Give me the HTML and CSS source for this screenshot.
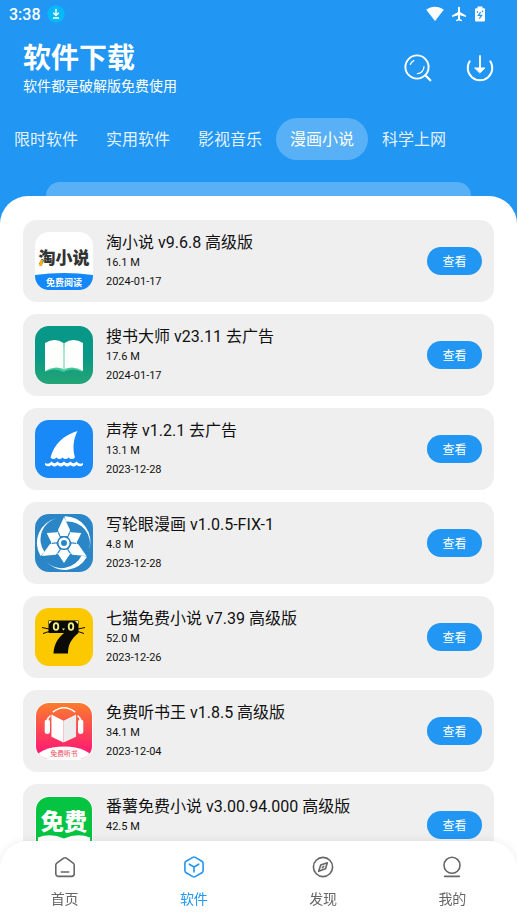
FILE: index.html
```
<!DOCTYPE html>
<html lang="zh-CN">
<head>
    <meta charset="UTF-8">
    <meta name="viewport" content="width=device-width, initial-scale=1.0">
    <title>软件下载</title>
    <link rel="stylesheet" href="styles.css">
</head>
<body>
    <header class="header">
        <div class="status-bar">
            <span class="time">3:38</span>
            <svg class="status-dl" width="18" height="18" viewBox="0 0 18 18">
                <circle cx="9" cy="9" r="8.7" fill="#03b9fb"/>
                <path d="M9 3.8v6.4M6.2 7.8L9 10.6l2.8-2.8M6 13h6" fill="none" stroke="#fff" stroke-width="1.4"/>
            </svg>
            <div class="status-icons">
                <svg width="18" height="16" viewBox="0 0 18 16"><path d="M.2 3.8C5.4-.2 12.600-.2 17.800 3.800L9 15z" fill="#fff"/></svg>
                <svg width="16" height="16" viewBox="0 0 16 16"><path d="M7 1.800a1 1 0 0 1 2 0V6l6 3.400v1.500L9 9.300v3.600l1.800 1.200v1.200L8 14.500l-2.800.8v-1.200L7 12.900V9.300l-6 1.600V9.400L7 6z" fill="#fff"/></svg>
                <svg width="12" height="16" viewBox="0 0 12 16">
                    <path d="M3.500.5h5v1.700H10a1 1 0 0 1 1 1V14.500a1 1 0 0 1-1 1H2a1 1 0 0 1-1-1V3.200a1 1 0 0 1 1-1h1.500z" fill="#fff"/>
                    <path d="M6.700 6L4.300 9.300h3.400L5.300 12.600M3.500 5.300v1.700M8.500 4.500v1.700" fill="none" stroke="#2196f3" stroke-width="1.200"/>
                </svg>
            </div>
        </div>

        <div class="title-row">
            <div>
                <h1>软件下载</h1>
                <p>软件都是破解版免费使用</p>
            </div>
            <div class="actions">
                <button class="icon-btn" aria-label="搜索">
                    <svg width="30" height="30" viewBox="0 0 30 30" fill="none" stroke="#fff" stroke-linecap="round">
                        <circle cx="14" cy="14" r="11.600" stroke-width="1.900"/>
                        <path d="M22.500 22.500l4.800 4.800" stroke-width="2.200"/>
                        <path d="M7.300 11.500c.6-1.800 1.900-3.100 3.500-3.900M21 13.500c0 4-2.800 7-6.600 7.200" stroke-width="1.200"/>
                    </svg>
                </button>
                <button class="icon-btn" aria-label="下载">
                    <svg width="30" height="30" viewBox="0 0 30 30" fill="none" stroke="#fff" stroke-linecap="round">
                        <path d="M4.700 8.200A12.300 12.300 0 1 0 25.300 8.200" stroke-width="1.900"/>
                        <path d="M15 3v14" stroke-width="1.900"/>
                        <path d="M10 15h10l-5 4.700z" fill="#fff" stroke-width="1"/>
                    </svg>
                </button>
            </div>
        </div>

        <nav class="tabs">
            <button class="tab">限时软件</button>
            <button class="tab">实用软件</button>
            <button class="tab">影视音乐</button>
            <button class="tab active">漫画小说</button>
            <button class="tab">科学上网</button>
        </nav>
        <div class="back-panel"></div>
    </header>

    <main class="sheet">
        <ul class="app-list">
            <li class="card">
                <svg class="app-icon" viewBox="0 0 58 58">
                    <rect width="58" height="58" fill="#fff"/>
                    <text x="29" y="32" font-size="17" font-weight="900" text-anchor="middle" fill="#333">淘小说</text>
                    <path d="M4 34l1.500-6h2.500l-1 6z" fill="#ffb020"/>
                    <path d="M0 43Q29 39 58 43V58H0z" fill="#1488fa"/>
                    <text x="29" y="54" font-size="9" font-weight="700" text-anchor="middle" fill="#fff">免费阅读</text>
                </svg>
                <div class="info">
                    <h2>淘小说 v9.6.8 高级版</h2>
                    <p>16.1 M</p>
                    <p>2024-01-17</p>
                </div>
                <button class="view-btn">查看</button>
            </li>
            <li class="card">
                <svg class="app-icon" viewBox="0 0 58 58">
                    <defs>
                        <linearGradient id="teal" x1="0" y1="0" x2="0" y2="1">
                            <stop offset=".5" stop-color="#079887"/>
                            <stop offset="1" stop-color="#24a575"/>
                        </linearGradient>
                    </defs>
                    <rect width="58" height="58" fill="url(#teal)"/>
                    <path d="M10 21q9-5 18.500 0 9.500-5 19 0v25q-10-5-19 0-9-5-18.500 0z" fill="#46c79a"/>
                    <path d="M10 17q10-6 18.500 0v26q-9-4-18.500 2zM29.500 17q9-6 18.500 0v28q-9-6-18.500-2z" fill="#fdfffc"/>
                    <path d="M29 17v27" stroke="#b5e9d2" stroke-width="1"/>
                </svg>
                <div class="info">
                    <h2>搜书大师 v23.11 去广告</h2>
                    <p>17.6 M</p>
                    <p>2024-01-17</p>
                </div>
                <button class="view-btn">查看</button>
            </li>
            <li class="card">
                <svg class="app-icon" viewBox="0 0 58 58">
                    <rect width="58" height="58" fill="#1989f8"/>
                    <path d="M42.500 11C29 15 19 24 15.500 37.500q3 3 6 0 3 3 6 0 3 3 6 0 3 3 6.500 0C37.500 29 38 20 42.500 11z" fill="#fff"/>
                    <path d="M10 43q3.500 2 6.500-1.500 3 3.500 6 0 3 3.500 6.500 0 3 3.500 6.500 0 3 3.500 6 0 3 3.500 6.500 1.500v2q-3 2.500-6.500 0-3 3-6 0-3 3-6.500 0-3 3-6.500 0-3 3-6 0-3 2.500-6.500 0z" fill="#fff"/>
                </svg>
                <div class="info">
                    <h2>声荐 v1.2.1 去广告</h2>
                    <p>13.1 M</p>
                    <p>2023-12-28</p>
                </div>
                <button class="view-btn">查看</button>
            </li>
            <li class="card">
                <svg class="app-icon" viewBox="-29 -29 58 58">
                    <defs>
                        <g id="blade">
                            <path d="M0-26L6-13 3.500-7h-7L-6-13z"/>
                            <path d="M-7-25A25.500 25.500 0 0 0-23.500 13L-19.500 9A22 22 0 0 1-7-25z"/>
                            <path d="M0 20L6 11 3 6.500h-6L-6 11z"/>
                        </g>
                    </defs>
                    <rect x="-29" y="-29" width="58" height="58" fill="#2b86c8"/>
                    <g fill="#fff">
                        <use href="#blade"/>
                        <use href="#blade" transform="rotate(120)"/>
                        <use href="#blade" transform="rotate(240)"/>
                    </g>
                    <circle r="12.500" fill="none" stroke="#fff" stroke-width=".7"/>
                    <circle r="7" fill="#2b86c8"/>
                    <circle r="5.500" fill="#fff"/>
                    <circle r="3" fill="#2b86c8"/>
                </svg>
                <div class="info">
                    <h2>写轮眼漫画 v1.0.5-FIX-1</h2>
                    <p>4.8 M</p>
                    <p>2023-12-28</p>
                </div>
                <button class="view-btn">查看</button>
            </li>
            <li class="card">
                <svg class="app-icon" viewBox="0 0 58 58">
                    <rect width="58" height="58" fill="#fcc800"/>
                    <path d="M13.500 12.500h30V25C36 31 33 37 33 45.500H18.500C19 36 23 30 29 25H13.500z" fill="#0a0a06"/>
                    <g fill="none" stroke="#f2ee86" stroke-width="1.800">
                        <ellipse cx="21" cy="18.500" rx="2.300" ry="3.400"/>
                        <ellipse cx="36" cy="18.500" rx="2.300" ry="3.400"/>
                    </g>
                    <path d="M27 20.500h3l-1.500 2zM14 13h3l-3 3zM43 13h-3l3 3z" fill="#f2ee86"/>
                    <path d="M7 19.500l7 1.500M8 25.500l6-2M43 21l7-1.500M43 23.500l6 2" stroke="#0a0a06" stroke-width="1"/>
                </svg>
                <div class="info">
                    <h2>七猫免费小说 v7.39 高级版</h2>
                    <p>52.0 M</p>
                    <p>2023-12-26</p>
                </div>
                <button class="view-btn">查看</button>
            </li>
            <li class="card">
                <svg class="app-icon edged" viewBox="0 0 58 58">
                    <defs>
                        <linearGradient id="sunset" x1="0" y1="0" x2="0" y2="1">
                            <stop offset="0" stop-color="#fc7c2c"/>
                            <stop offset=".85" stop-color="#fe1e70"/>
                        </linearGradient>
                    </defs>
                    <rect width="58" height="58" fill="url(#sunset)"/>
                    <ellipse cx="29" cy="60" rx="31" ry="15" fill="#fff"/>
                    <path d="M16 12l12.500 6.500V41L16 35z" fill="#fff"/>
                    <path d="M41.500 12L28.500 18.500V41l13-6z" fill="#ececec"/>
                    <path d="M17.500 9.500q11.500-9 23 0M15 13q-3 2-3.500 6M43 13q3 2 3.500 6" fill="none" stroke="#fff" stroke-width="1.500"/>
                    <rect x="9" y="17" width="5.500" height="15" rx="2.700" fill="#fff"/>
                    <rect x="43.500" y="17" width="5.500" height="15" rx="2.700" fill="#fff"/>
                    <text x="29" y="54.500" font-size="7" font-weight="500" text-anchor="middle" fill="#f5596b">免费听书</text>
                </svg>
                <div class="info">
                    <h2>免费听书王 v1.8.5 高级版</h2>
                    <p>34.1 M</p>
                    <p>2023-12-04</p>
                </div>
                <button class="view-btn">查看</button>
            </li>
            <li class="card">
                <svg class="app-icon edged" viewBox="0 0 58 58">
                    <rect width="58" height="58" fill="#05c441"/>
                    <text x="29" y="34" font-size="24" font-weight="900" text-anchor="middle" fill="#fff">免费</text>
                    <path d="M2 42q13-5 27 1 14-6 27-1v16H2z" fill="#fff"/>
                </svg>
                <div class="info">
                    <h2>番薯免费小说 v3.00.94.000 高级版</h2>
                    <p>42.5 M</p>
                    <p>2023-12-04</p>
                </div>
                <button class="view-btn">查看</button>
            </li>
        </ul>
    </main>

    <nav class="bottom-nav">
        <a href="#home">
            <svg viewBox="0 0 24 24"><path d="M3.800 8.200L10.600 3.200a2.400 2.400 0 0 1 2.800 0L20.200 8.200a2.400 2.400 0 0 1 1 2V18.800a2.600 2.600 0 0 1-2.600 2.600H5.400a2.600 2.600 0 0 1-2.600-2.600V10.200a2.400 2.400 0 0 1 1-2zM8.300 17h7.400"/></svg>
            <span>首页</span>
        </a>
        <a href="#apps" class="current">
            <svg viewBox="0 0 24 24"><path d="M10.800 2.400a2.400 2.400 0 0 1 2.400 0L19.900 6.200a2.400 2.400 0 0 1 1.200 2V15.800a2.400 2.400 0 0 1-1.200 2L13.200 21.600a2.400 2.400 0 0 1-2.400 0L4.100 17.800a2.400 2.400 0 0 1-1.200-2V8.200a2.400 2.400 0 0 1 1.200-2zM7.300 9.200L12 12l4.700-2.800M12 12v5"/></svg>
            <span>软件</span>
        </a>
        <a href="#discover">
            <svg viewBox="0 0 24 24"><circle cx="12" cy="12" r="9.600"/><path d="M16.300 7.700l-1.800 6-6.800 2.600 2-6.200zM11.300 12.700l1.400-1.400"/></svg>
            <span>发现</span>
        </a>
        <a href="#me">
            <svg viewBox="0 0 24 24"><circle cx="12" cy="10.300" r="8"/><path d="M4.700 21.400h14.600"/></svg>
            <span>我的</span>
        </a>
    </nav>
</body>
</html>
```
FILE: styles.css
```
* {
    box-sizing: border-box;
}

body {
    margin: 0;
    height: 100vh;
    display: flex;
    flex-direction: column;
    overflow: hidden;
    background: #2196f3;
    color: #111;
    font-family: Roboto, "Noto Sans CJK SC", sans-serif;
}

h1, h2, p, ul {
    margin: 0;
    padding: 0;
}

button {
    border: none;
    padding: 0;
    background: none;
    color: #fff;
    font-family: inherit;
}

.header {
    flex: none;
    color: #fff;
}

/* status bar */
.status-bar {
    display: flex;
    align-items: center;
    gap: 6px;
    height: 28px;
    padding: 0 31px 0 9px;
}

.time {
    font-size: 16px;
    font-weight: 500;
}

.status-icons {
    display: flex;
    align-items: center;
    gap: 7px;
    margin-left: auto;
}

/* title and actions */
.title-row {
    display: flex;
    justify-content: space-between;
    align-items: center;
    padding: 12px 22px 0 23px;
}

.title-row h1 {
    padding-top: 2px;
    font-size: 28px;
    line-height: 34px;
}

.title-row p {
    font-size: 14px;
    line-height: 20px;
}

.actions {
    display: flex;
    gap: 32px;
}

.icon-btn {
    width: 30px;
    height: 30px;
}

.icon-btn svg {
    display: block;
}

/* category tabs */
.tabs {
    display: flex;
    margin-top: 22px;
}

.tab {
    height: 42px;
    padding: 0 14px 2px;
    border-radius: 21px;
    font-size: 16px;
    white-space: nowrap;
    color: rgba(255, 255, 255, 0.9);
}

.tab.active {
    background: rgba(255, 255, 255, 0.25);
    color: #fff;
}

.back-panel {
    height: 42px;
    margin: 22px 46px 0;
    border-radius: 14px;
    background: rgba(255, 255, 255, 0.25);
}

/* app list */
.sheet {
    position: relative;
    flex: 1;
    min-height: 0;
    margin-top: -28px;
    padding: 24px 23px 0;
    border-radius: 28px 28px 0 0;
    background: #fff;
    overflow: hidden;
}

.app-list {
    display: flex;
    flex-direction: column;
    gap: 12px;
    list-style: none;
}

.card {
    display: flex;
    align-items: center;
    padding: 11px 12px;
    border-radius: 14px;
    background: #efefef;
}

.app-icon {
    flex: none;
    width: 58px;
    height: 58px;
    border-radius: 14px;
    font-family: "Noto Sans CJK SC", sans-serif;
}

.app-icon.edged {
    border: 1px solid #fff;
}

.info {
    flex: 1;
    min-width: 0;
    margin-left: 13px;
    padding-top: 2px;
}

.info h2 {
    font-size: 16px;
    font-weight: 400;
    line-height: 20px;
}

.info p {
    font-size: 11px;
    line-height: 19px;
}

.view-btn {
    width: 55px;
    height: 28px;
    padding-bottom: 2px;
    border-radius: 14px;
    background: #2196f3;
    font-size: 12px;
}

/* bottom navigation */
.bottom-nav {
    position: fixed;
    left: 0;
    right: 0;
    bottom: 0;
    display: flex;
    height: 78px;
    border-radius: 28px 28px 0 0;
    background: #fff;
    box-shadow: 0 0 10px rgba(0, 0, 0, 0.08);
}

.bottom-nav a {
    flex: 1;
    display: flex;
    flex-direction: column;
    align-items: center;
    gap: 10px;
    padding-top: 14px;
    color: #666;
    font-size: 14px;
    line-height: 20px;
    text-decoration: none;
}

.bottom-nav svg {
    width: 24px;
    height: 24px;
    fill: none;
    stroke: currentColor;
    stroke-width: 1.6;
    stroke-linecap: round;
    stroke-linejoin: round;
}

.bottom-nav .current {
    color: #2196f3;
}
```
